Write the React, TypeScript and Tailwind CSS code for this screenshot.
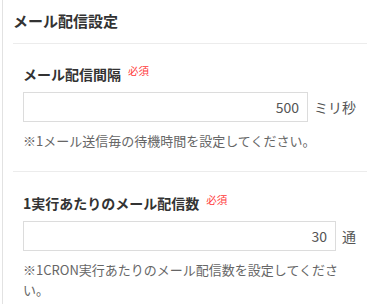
import React from "react";

const font = { fontFamily: '"Noto Sans CJK JP", "Noto Sans", sans-serif' };

function Field({
  label,
  value,
  unit,
  help,
  topPad,
}: {
  label: string;
  value: string;
  unit: string;
  help: string;
  topPad: string;
}) {
  return (
    <div className={`${topPad} pb-[20px] pl-[10px] pr-[11px] border-b border-[#ececec]`}>
      <div className="flex items-start leading-[20px]">
        <span className="text-[14px] font-bold text-[#333]">{label}</span>
        <span className="ml-[7px] text-[10.5px] leading-[14px] text-[#ff3b3b]">必須</span>
      </div>
      <div className="mt-[8px] flex items-center">
        <input
          readOnly
          value={value}
          className="flex-1 min-w-0 h-[30px] border border-[#dcdcdc] bg-white px-[8px] text-right text-[14px] text-[#555] outline-none"
          style={font}
        />
        <span className="ml-[6px] text-[14px] text-[#555] whitespace-nowrap">{unit}</span>
      </div>
      <p className="mt-[9px] text-[13px] leading-[20px] text-[#666]">{help}</p>
    </div>
  );
}

export default function App() {
  return (
    <div className="w-[367px] h-[304px] overflow-hidden bg-white" style={font}>
      <div className="ml-[2px] h-full border-l border-[#e2e2e2] pl-[10px]">
        <div className="pt-[10px] pb-[11px] border-b border-[#ececec]">
          <h2 className="text-[15px] font-bold leading-[22px] text-[#333]">メール配信設定</h2>
        </div>
        <Field
          label="メール配信間隔"
          value="500"
          unit="ミリ秒"
          help="※1メール送信毎の待機時間を設定してください。"
          topPad="pt-[20px]"
        />
        <Field
          label="1実行あたりのメール配信数"
          value="30"
          unit="通"
          help="※1CRON実行あたりのメール配信数を設定してください。"
          topPad="pt-[21px]"
        />
      </div>
    </div>
  );
}
